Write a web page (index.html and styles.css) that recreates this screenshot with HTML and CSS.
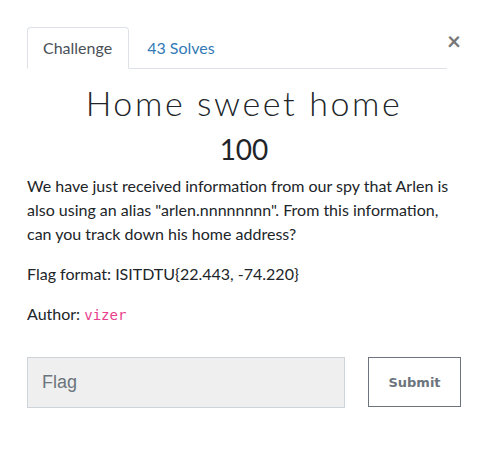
FILE: index.html
```html
<!DOCTYPE html>
<html>
<head>
<meta charset="utf-8">
<link rel="stylesheet" href="styles.css">
</head>
<body>
<div class="modal">
  <div class="head">
    <ul class="tabs">
      <li class="tab active">Challenge</li>
      <li class="tab link">43 Solves</li>
    </ul>
    <button class="close" aria-label="Close">&times;</button>
  </div>
  <div class="content">
    <h2 class="title">Home sweet home</h2>
    <h3 class="value">100</h3>
    <p class="desc">We have just received information from our spy that Arlen is also using an alias "arlen.nnnnnnnn". From this information, can you track down his home address?</p>
    <p class="desc">Flag format: ISITDTU{22.443, -74.220}</p>
    <p class="desc">Author: <code class="code">vizer</code></p>
    <div class="form">
      <input class="flag" type="text" placeholder="Flag">
      <button class="submit">Submit</button>
    </div>
  </div>
</div>
</body>
</html>
```
FILE: styles.css
```css
html, body {
  margin: 0;
  padding: 0;
  background: #fff;
}
body {
  font-family: Lato, "Open Sans", sans-serif;
  font-size: 16px;
  line-height: 24px;
  color: #212529;
}
.modal {
  padding: 27px 26px 0 27px;
}
.head {
  display: flex;
  align-items: flex-start;
}
.tabs {
  flex: 1;
  display: flex;
  list-style: none;
  margin: 0;
  padding: 0;
  border-bottom: 1px solid #dee2e6;
}
.tab {
  padding: 8px 15px;
  margin-bottom: -1px;
  border: 1px solid transparent;
  border-top-left-radius: 4px;
  border-top-right-radius: 4px;
}
.tab.active {
  color: #495057;
  border-color: #dee2e6 #dee2e6 #fff;
  padding-right: 16px;
}
.tab.link {
  color: #337ab7;
  padding-left: 17px;
}
.close {
  margin: 2px 0 0 0;
  width: 14px;
  padding: 0;
  border: 0;
  background: none;
  font-family: Lato, sans-serif;
  font-size: 24px;
  line-height: 24px;
  font-weight: 700;
  color: #777;
  text-align: right;
}
.content {
  display: flex;
  flex-direction: column;
}
.title {
  margin: 14px 0 0;
  text-align: center;
  font-family: Lato, sans-serif;
  font-weight: 300;
  font-size: 34px;
  line-height: 40px;
  letter-spacing: 2.6px;
  color: #212529;
}
.value {
  margin: 9px 0 8px;
  text-align: center;
  font-weight: 400;
  font-size: 28px;
  line-height: 34px;
}
.desc {
  margin: 0 0 16px;
}
.code {
  font-family: "DejaVu Sans Mono", monospace;
  font-size: 14px;
  color: #e83e8c;
}
.form {
  display: flex;
  align-items: flex-start;
  margin-top: 14px;
}
.flag {
  box-sizing: border-box;
  width: 318px;
  height: 51px;
  padding: 0 14px;
  background: #efefef;
  border: 1px solid #ced4da;
  border-radius: 0;
  font-family: "Liberation Sans", Arial, sans-serif;
  font-size: 18px;
  color: #495057;
  outline: none;
}
.flag::placeholder {
  color: #6c757d;
}
.submit {
  box-sizing: border-box;
  margin-left: auto;
  width: 93px;
  height: 50px;
  background: #fff;
  border: 1px solid #6c757d;
  border-radius: 0;
  font-family: "DejaVu Sans", sans-serif;
  font-weight: 700;
  font-size: 13px;
  letter-spacing: 0;
  color: #6c757d;
}
```
